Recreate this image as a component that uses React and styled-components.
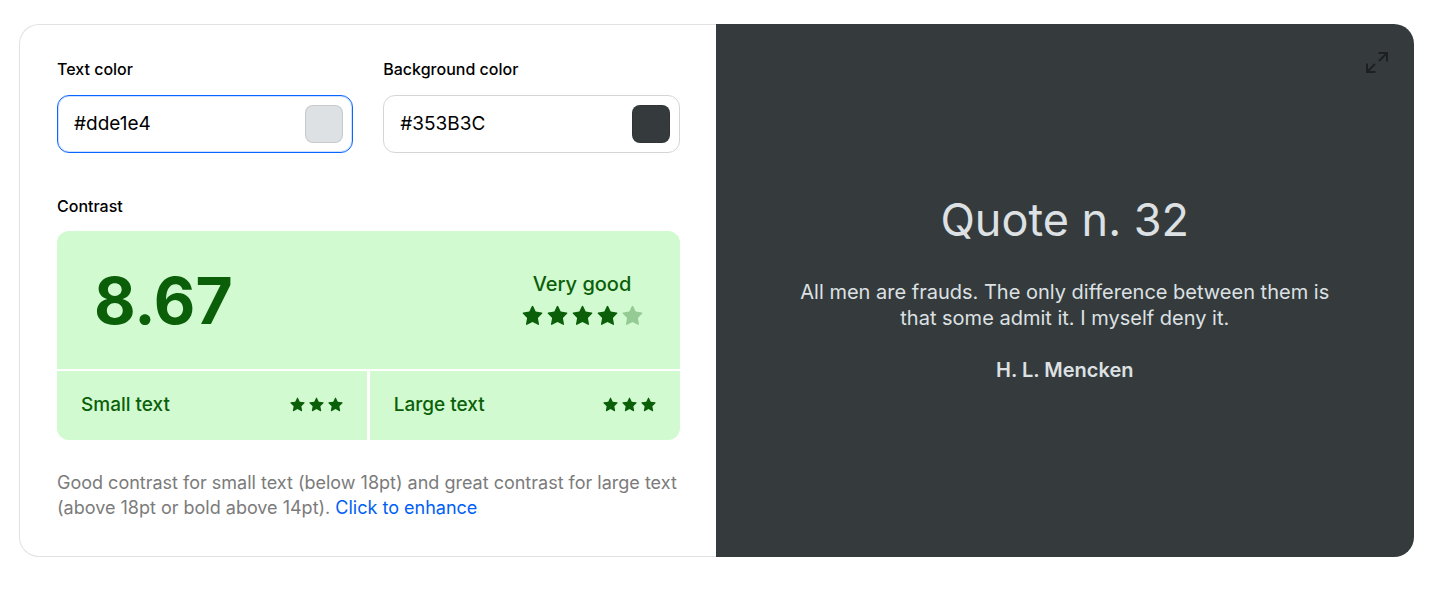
import React, { useState } from "react";
import styled, { createGlobalStyle } from "styled-components";

const GlobalStyle = createGlobalStyle`
  *, *::before, *::after { box-sizing: border-box; }
  body {
    margin: 0;
    background: #fff;
    color: #000;
    font-family: Inter, "Liberation Sans", sans-serif;
  }
  h1, p { margin: 0; }
`;

const Page = styled.main`
  padding: 24px 26px 40px 19px;
`;

const Card = styled.section`
  display: grid;
  grid-template-columns: calc(50% - 1px) 1fr;
  border-radius: 20px;
`;

const Controls = styled.div`
  padding: 32px 36px 36px 37px;
  border: 1px solid #e2e2e2;
  border-right: 0;
  border-radius: 20px 0 0 20px;
`;

const Fields = styled.div`
  display: grid;
  grid-template-columns: 1fr 1fr;
  gap: 30px;
  margin-bottom: 41px;
`;

const Field = styled.div`
  min-width: 0;
`;

const Label = styled.label`
  display: block;
  margin-bottom: 14px;
  font-size: 16px;
  line-height: 24px;
  font-weight: 500;
`;

const Caption = styled(Label).attrs({ as: "p" })`
  margin-bottom: 13px;
`;

const InputBox = styled.div`
  display: flex;
  align-items: center;
  height: 58px;
  padding: 0 9px 0 16px;
  border: 1px solid ${(p) => (p.$active ? "#0b66ff" : "#d5d5d5")};
  box-shadow: inset 0 0 0 1px ${(p) => (p.$active ? "rgba(11, 102, 255, 0.2)" : "transparent")};
  border-radius: 12px;
`;

const HexInput = styled.input`
  flex: 1;
  min-width: 0;
  padding: 0;
  border: 0;
  outline: 0;
  background: transparent;
  color: #000;
  font: 400 19px/28px Inter, "Liberation Sans", sans-serif;
`;

const Swatch = styled.button`
  flex: none;
  width: 38px;
  height: 38px;
  padding: 0;
  border: 1px solid rgba(0, 0, 0, 0.1);
  border-radius: 8px;
  background: ${(p) => p.$color};
  cursor: pointer;
`;

const Result = styled.div`
  display: grid;
  grid-template-columns: 1fr 1fr;
  gap: 2px 3px;
  overflow: hidden;
  border-radius: 12px;
  color: #0b5f09;
`;

const Score = styled.div`
  grid-column: 1 / -1;
  display: flex;
  align-items: center;
  justify-content: space-between;
  height: 138px;
  padding: 0 37px;
  background: #d1fad0;
`;

const Ratio = styled.strong`
  padding-top: 2px;
  font-size: 64px;
  line-height: 76px;
  font-weight: 700;
`;

const Rating = styled.div`
  display: flex;
  flex-direction: column;
  align-items: center;
  gap: 7px;
  padding-bottom: 4px;
  font-size: 20px;
  line-height: 28px;
  font-weight: 500;
`;

const Level = styled.div`
  display: flex;
  align-items: center;
  justify-content: space-between;
  height: 69px;
  padding: 0 24px 2px;
  background: #d1fad0;
  font-size: 19px;
  line-height: 28px;
  font-weight: 500;
`;

const StarRow = styled.div`
  display: flex;
  gap: 4px;
`;

const StarIcon = styled.svg`
  display: block;
  width: ${(p) => p.$size}px;
  height: ${(p) => p.$size}px;
  fill: currentColor;
  opacity: ${(p) => (p.$dim ? 0.3 : 1)};
`;

const Summary = styled.p`
  margin-top: 30px;
  color: #7b7b7b;
  font-size: 18px;
  line-height: 25px;
`;

const Enhance = styled.a`
  color: #0060f5;
  text-decoration: none;
`;

const Preview = styled.div`
  position: relative;
  display: flex;
  flex-direction: column;
  align-items: center;
  justify-content: center;
  padding: 36px 80px 42px;
  border-radius: 0 20px 20px 0;
  background: ${(p) => p.$background};
  color: ${(p) => p.$color};
  text-align: center;
`;

const Expand = styled.button`
  position: absolute;
  top: 26px;
  right: 25px;
  padding: 0;
  border: 0;
  background: none;
  color: #1d2021;
  cursor: pointer;
`;

const ExpandIcon = styled.svg`
  display: block;
  width: 24px;
  height: 24px;
  fill: none;
  stroke: currentColor;
  stroke-width: 2;
`;

const Title = styled.h1`
  margin-bottom: 31px;
  font-size: 45px;
  line-height: 56px;
  font-weight: 400;
`;

const Quote = styled.p`
  max-width: 540px;
  margin-bottom: 26px;
  font-size: 20px;
  line-height: 26px;
`;

const Author = styled.p`
  font-size: 20px;
  line-height: 26px;
  font-weight: 600;
`;

function Stars({ total, filled = total, size }) {
  return (
    <StarRow role="img" aria-label={`${filled} of ${total} stars`}>
      {Array.from({ length: total }, (_, i) => (
        <StarIcon key={i} viewBox="0 0 21 21" $size={size} $dim={i >= filled} aria-hidden="true">
          <path d="M9.8 1.3Q10.5 0 11.2 1.3L13.7 6.6L19.8 7.4Q21 7.7 20.2 8.6L15.9 12.9L17 18.9Q17.1 20.2 16 19.8L10.5 16.9L5 19.8Q3.9 20.2 4 18.9L5.1 12.9L.8 8.6Q0 7.7 1.2 7.4L7.3 6.6Z" />
        </StarIcon>
      ))}
    </StarRow>
  );
}

function ColorField({ id, label, value, onChange, active }) {
  return (
    <Field>
      <Label htmlFor={id}>{label}</Label>
      <InputBox $active={active}>
        <HexInput id={id} value={value} onChange={(e) => onChange(e.target.value)} />
        <Swatch type="button" $color={value} aria-label={`Pick ${label.toLowerCase()}`} />
      </InputBox>
    </Field>
  );
}

export default function App() {
  const [text, setText] = useState("#dde1e4");
  const [background, setBackground] = useState("#353B3C");
  return (
    <>
      <GlobalStyle />
      <Page>
        <Card>
          <Controls>
            <Fields>
              <ColorField id="text-color" label="Text color" value={text} onChange={setText} active />
              <ColorField id="background-color" label="Background color" value={background} onChange={setBackground} />
            </Fields>
            <Caption>Contrast</Caption>
            <Result>
              <Score>
                <Ratio>8.67</Ratio>
                <Rating>
                  Very good
                  <Stars total={5} filled={4} size={21} />
                </Rating>
              </Score>
              <Level>
                Small text
                <Stars total={3} size={15} />
              </Level>
              <Level>
                Large text
                <Stars total={3} size={15} />
              </Level>
            </Result>
            <Summary>
              Good contrast for small text (below 18pt) and great contrast for large text (above 18pt or bold above
              14pt). <Enhance href="#enhance">Click to enhance</Enhance>
            </Summary>
          </Controls>
          <Preview $background={background} $color={text}>
            <Expand type="button" aria-label="Expand preview">
              <ExpandIcon viewBox="0 0 24 24" aria-hidden="true">
                <path d="M13.5 3H22V11.5M22 3L14 11M2 13.5V22H10.5M2 22L10 14" />
              </ExpandIcon>
            </Expand>
            <Title>Quote n. 32</Title>
            <Quote>
              All men are frauds. The only difference between them is that some admit it. I myself deny it.
            </Quote>
            <Author>H. L. Mencken</Author>
          </Preview>
        </Card>
      </Page>
    </>
  );
}
